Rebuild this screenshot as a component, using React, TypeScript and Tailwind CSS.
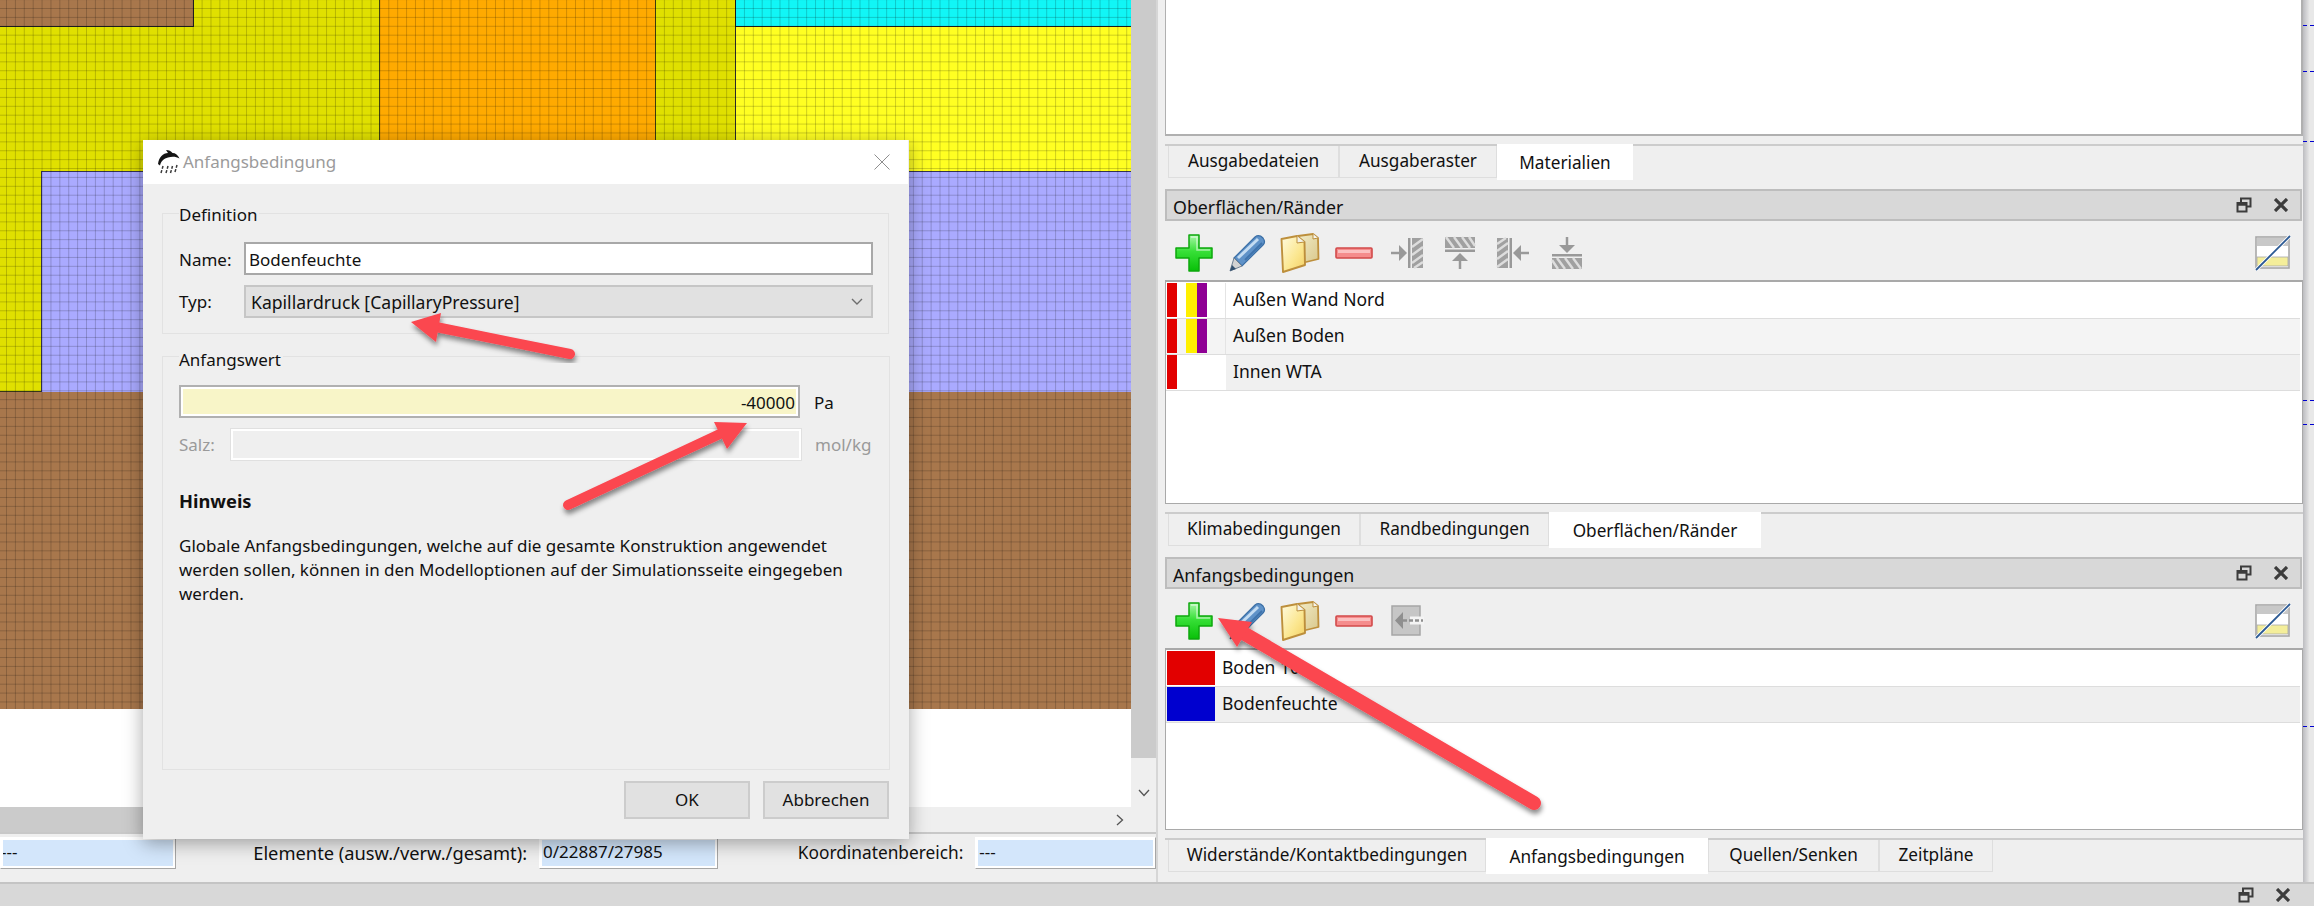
import React from "react";

const Plus = () => (
  <svg width="38" height="38" viewBox="0 0 38 38">
    <defs>
      <linearGradient id="pg" x1="0" y1="0" x2="0" y2="1">
        <stop offset="0" stopColor="#a8f8a8" />
        <stop offset="0.45" stopColor="#38e038" />
        <stop offset="1" stopColor="#08c008" />
      </linearGradient>
    </defs>
    <path d="M14 1h10v13h13v10H24v13H14V24H1V14h13z" fill="url(#pg)" stroke="#0da80d" strokeWidth="1.5" strokeLinejoin="round" />
    <path d="M16 3h6v13h13" fill="none" stroke="#ffffff" strokeOpacity="0.55" strokeWidth="1.5" />
  </svg>
);

const Pencil = () => (
  <svg width="38" height="38" viewBox="0 0 38 38">
    <path d="M6 24 L27 3 Q31 0 35 4 Q38 8 35 11 L14 32 Z" fill="#5f92c8" stroke="#3a6ea5" strokeWidth="1.2" />
    <path d="M10 24 L30 5" stroke="#c4dcf2" strokeWidth="3" />
    <path d="M17 26 L34 9" stroke="#3f74ad" strokeWidth="2" />
    <path d="M6 24 L14 32 L2 37 Z" fill="#d2d2d2" stroke="#6d7f92" strokeWidth="1" />
    <path d="M2 37 L4 31 L8 35 Z" fill="#33506e" />
  </svg>
);

const Files = () => (
  <svg width="40" height="40" viewBox="0 0 40 40">
    <defs>
      <linearGradient id="fg" x1="0" y1="0" x2="1" y2="1">
        <stop offset="0" stopColor="#fffbe0" />
        <stop offset="0.6" stopColor="#fbe68e" />
        <stop offset="1" stopColor="#f3cf63" />
      </linearGradient>
      <linearGradient id="fb" x1="0" y1="0" x2="1" y2="1">
        <stop offset="0" stopColor="#f2ecc8" />
        <stop offset="1" stopColor="#d9c88c" />
      </linearGradient>
    </defs>
    <path d="M18 3 L33 1 L38 5 L38.5 26 L22 30 Z" fill="url(#fb)" stroke="#bd8f3c" strokeWidth="1.8" strokeLinejoin="round" />
    <path d="M33 1 L33 6 L38 5" fill="#f6f6f0" stroke="#bd8f3c" strokeWidth="1" />
    <path d="M1.5 6 L17 3 L24.5 9 L25 32 L3 39 Z" fill="url(#fg)" stroke="#bd8f3c" strokeWidth="1.9" strokeLinejoin="round" />
    <path d="M17 3 L17 10 L24.5 9" fill="#f2f2ea" stroke="#bd8f3c" strokeWidth="1" />
  </svg>
);

const Minus = () => (
  <svg width="38" height="12" viewBox="0 0 38 12">
    <rect x="1" y="1" width="36" height="10" rx="1" fill="#f58c8c" stroke="#d24a4a" strokeWidth="1.6" />
    <rect x="3" y="3" width="32" height="3" fill="#fbc0c0" />
  </svg>
);

const WallIcon = ({ rotate }: { rotate: number }) => (
  <svg width="34" height="34" viewBox="0 0 34 34">
    <g transform={`rotate(${rotate} 17 17)`}>
      <rect x="22" y="2" width="11" height="30" fill="#a0a0a0" />
      <path d="M22 11 L33 3 M22 19 L33 11 M22 27 L33 19 M24 32 L33 26" stroke="#dddddd" strokeWidth="2.4" />
      <rect x="18" y="2" width="2.5" height="30" fill="#999999" />
      <path d="M1 17 H10" stroke="#999999" strokeWidth="2.5" />
      <path d="M9 9 L17 17 L9 25 Z" fill="#999999" />
    </g>
  </svg>
);

const ExportIcon = () => (
  <svg width="34" height="34" viewBox="0 0 34 34">
    <rect x="2" y="2" width="28" height="29" fill="#c6c6c6" stroke="#a6a6a6" strokeWidth="1.5" />
    <rect x="20" y="12.5" width="14" height="8" fill="#f4f4f4" />
    <path d="M5 16.5 L13 8 V25 Z" fill="#8f8f8f" />
    <path d="M13 16.5 H33" stroke="#8f8f8f" strokeWidth="2.5" strokeDasharray="4 2" />
  </svg>
);

const TableIcon = () => (
  <svg width="36" height="36" viewBox="0 0 36 36">
    <rect x="1" y="2" width="33" height="31" fill="#ffffff" stroke="#a8a8a8" strokeWidth="1.6" />
    <rect x="2" y="3" width="31" height="8" fill="#c8c8c8" />
    <rect x="2" y="22" width="31" height="9" fill="#f4ee9a" stroke="#a8a8a8" strokeWidth="0.8" />
    <path d="M1 35 L35 1" stroke="#ffffff" strokeWidth="3.5" />
    <path d="M1 35 L35 1" stroke="#2c5a94" strokeWidth="1.8" />
  </svg>
);

const FloatIcon = () => (
  <svg width="16" height="16" viewBox="0 0 16 16" fill="none" stroke="#3c3c3c" strokeWidth="2">
    <rect x="5" y="1.5" width="9.5" height="8" />
    <rect x="1.5" y="6" width="9" height="8.5" fill="#d8d8d8" />
    <path d="M1.5 7.5h9" strokeWidth="2.5" />
  </svg>
);

const CloseIcon = () => (
  <svg width="14" height="14" viewBox="0 0 14 14" stroke="#3c3c3c" strokeWidth="3.2">
    <path d="M1 1 L13 13 M13 1 L1 13" />
  </svg>
);

const Logo = () => (
  <svg width="24" height="24" viewBox="0 0 24 24">
    <path d="M2 14 C3 7 7 3 12 3 L10 0 C13 0 15 1 16.5 3 C19.5 3 22 5 23.5 8.5 C20 6.5 16 6.5 12 7.5 C8 8.5 5 11 4 15.5 Z" fill="#141414" />
    <path d="M5 23 L7 16 M10 23 L12 16 M14.5 23 L16.5 16 M19 22 L21 15" stroke="#3a3a3a" strokeWidth="1.5" strokeDasharray="3 1.5" />
  </svg>
);

const Canvas = () => (
  <div className="relative h-[807px] w-full overflow-hidden bg-white">
    <div className="absolute left-0 top-0 h-[709px] w-full bg-[#a8774c]" />
    <div className="absolute left-0 top-0 h-[392px] w-full bg-[#e0e000] border-b border-[#3a3a1a]" />
    <div className="absolute left-0 top-0 h-[27px] w-[194px] bg-[#a8774c] border-b border-r border-[#222222]" />
    <div className="absolute left-[379px] top-0 h-[172px] w-[277px] bg-[#ffaa00] border-x border-[#4a4a10]" />
    <div className="absolute left-[735px] top-0 h-[27px] w-[396px] bg-[#11f6f6] border-b border-l border-[#222222]" />
    <div className="absolute left-[735px] top-[27px] h-[145px] w-[396px] bg-[#ffff22] border-b border-l border-[#333333]" />
    <div className="absolute left-[41px] top-[171px] h-[221px] w-[1090px] bg-[#aaaaff] border-t border-l border-[#333355]" />
    <div className="absolute left-0 top-0 h-[709px] w-full bg-[linear-gradient(rgba(0,0,0,0.19)_1px,transparent_1px),linear-gradient(90deg,rgba(0,0,0,0.19)_1px,transparent_1px)] bg-[size:8.9px_8.9px] bg-[position:6px_8px]" />
  </div>
);

const Field = ({ cls, children }: { cls: string; children: React.ReactNode }) => (
  <div className={`${cls} h-[32px] border border-[#a6a6a6] border-t-white border-l-white bg-[#d3e6fb] px-[3px] text-[17px] leading-[28px] outline-2 outline-white -outline-offset-3`}>
    {children}
  </div>
);

const Status = () => (
  <div className="flex h-[50px] items-start border-t-2 border-[#c8c8c8] pt-[3px]">
    <Field cls="w-[176px] pl-0">---</Field>
    <div className="w-[364px] pr-[12px] pt-[4px] text-right text-[18.3px]">Elemente (ausw./verw./gesamt):</div>
    <Field cls="w-[179px]">0/22887/27985</Field>
    <div className="w-[258px] pr-[12px] pt-[4px] text-right text-[17.3px]">Koordinatenbereich:</div>
    <Field cls="w-[181px]">---</Field>
  </div>
);

type Tab = { label: string; w: string };

const Tabs = ({ tabs, active }: { tabs: Tab[]; active: number }) => (
  <div className="flex h-[36px] border-t-2 border-[#cccccc] pl-[3px] text-[17.2px]">
    {tabs.map((t, i) =>
      i === active ? (
        <div key={t.label} className={`${t.w} -mt-[2px] h-[36px] bg-white text-center leading-[38px]`}>
          {t.label}
        </div>
      ) : (
        <div key={t.label} className={`${t.w} h-[32px] border-x border-b border-[#dedede] text-center leading-[30px]`}>
          {t.label}
        </div>
      )
    )}
  </div>
);

const DockHeader = ({ title }: { title: string }) => (
  <div className="flex h-[32px] w-[1137px] items-center justify-between border-2 border-[#bdbdbd] bg-[#d8d8d8] pl-[6px] pr-[12px] text-[17.8px]">
    <span className="pt-[3px]">{title}</span>
    <div className="flex items-center gap-[22px]">
      <FloatIcon />
      <CloseIcon />
    </div>
  </div>
);

const Btn = ({ children }: { children: React.ReactNode }) => (
  <div className="flex w-[53.3px] items-center justify-center">{children}</div>
);

const Toolbar = ({ children }: { children: React.ReactNode }) => (
  <div className="flex h-[59px] items-center pl-[2px] pr-[12px] pt-[4px]">
    {children}
    <div className="ml-auto">
      <TableIcon />
    </div>
  </div>
);

const Cell = ({ cls }: { cls: string }) => <div className={`${cls} h-full`} />;

const Surfaces = () => (
  <div className="h-[224px] border border-[#a9a9a9] border-t-2 bg-white pr-[2px] pt-[1px] text-[17.5px]">
    <div className="flex h-[36px] border-b border-[#dddddd] bg-white">
      <div className="flex h-full w-[60px] border-r border-[#e4e4e4] pl-[1px] pb-[1px]">
        <Cell cls="w-[10px] bg-[#e20000]" /><Cell cls="w-[9px]" /><Cell cls="w-[11px] bg-[#fff000]" /><Cell cls="w-[10px] bg-[#8f0094]" />
      </div>
      <div className="pl-[7px] leading-[33px]">Außen Wand Nord</div>
    </div>
    <div className="flex h-[36px] border-b border-[#dddddd] bg-[#f4f4f4]">
      <div className="flex h-full w-[60px] border-r border-[#e4e4e4] pl-[1px] pb-[1px]">
        <Cell cls="w-[10px] bg-[#e20000]" /><Cell cls="w-[9px]" /><Cell cls="w-[11px] bg-[#fff000]" /><Cell cls="w-[10px] bg-[#8f0094]" />
      </div>
      <div className="pl-[7px] leading-[33px]">Außen Boden</div>
    </div>
    <div className="flex h-[36px] border-b border-[#dddddd] bg-[#f0f0f0]">
      <div className="flex h-full w-[60px] bg-white pl-[1px] pb-[1px]">
        <Cell cls="w-[10px] bg-[#e20000]" />
      </div>
      <div className="pl-[7px] leading-[33px]">Innen WTA</div>
    </div>
  </div>
);

const Conditions = () => (
  <div className="h-[182px] border border-[#a9a9a9] border-t-2 bg-white pr-[2px] pt-[1px] text-[17.5px]">
    <div className="flex h-[36px] border-b border-[#dddddd]">
      <div className="ml-[1px] h-[34px] w-[48px] bg-[#e20000]" />
      <div className="pl-[7px] leading-[33px]">Boden 10</div>
    </div>
    <div className="flex h-[36px] border-b border-[#dddddd] bg-[#efefef]">
      <div className="ml-[1px] h-[34px] w-[48px] bg-[#0000cf]" />
      <div className="pl-[7px] leading-[33px]">Bodenfeuchte</div>
    </div>
  </div>
);

const Dialog = () => (
  <div className="absolute left-[143px] top-[140px] flex h-[699px] w-[766px] flex-col bg-[#efefef] shadow-[0_4px_18px_rgba(0,0,0,0.35)]">
    <div className="flex h-[44px] w-[765px] shrink-0 items-center bg-white pl-[13px] pr-[18px]">
      <Logo />
      <span className="ml-[3px] text-[#9b9b9b]">Anfangsbedingung</span>
      <svg className="ml-auto" width="16" height="16" viewBox="0 0 16 16" stroke="#8e8e8e" strokeWidth="1">
        <path d="M0.5 0.5 L15.5 15.5 M15.5 0.5 L0.5 15.5" />
      </svg>
    </div>
    <div className="flex flex-1 flex-col px-[19px] pb-[20px] pt-[29px]">
      <div className="h-[121px] w-[727px] shrink-0 border border-[#e2e2e2] pl-[16px]">
        <div className="-mt-[12px] h-[26px] w-fit bg-[#efefef] pr-[2px] leading-[26px]">Definition</div>
        <div className="mt-[14px] flex h-[33px] items-center">
          <div className="w-[65px] pt-[2px]">Name:</div>
          <div className="h-full w-[629px] border-2 border-[#a8a8a8] bg-white pl-[3px] leading-[31px]">Bodenfeuchte</div>
        </div>
        <div className="mt-[10px] flex h-[33px] items-center">
          <div className="w-[65px]">Typ:</div>
          <div className="flex h-full w-[629px] items-center justify-between border-2 border-[#c6c6c6] bg-[#e1e1e1] pl-[5px] pr-[8px]">
            <span className="text-[17.6px]">Kapillardruck [CapillaryPressure]</span>
            <svg width="12" height="7" viewBox="0 0 12 7" fill="none" stroke="#6e6e6e" strokeWidth="1.4">
              <path d="M1 1 L6 6 L11 1" />
            </svg>
          </div>
        </div>
      </div>
      <div className="mt-[22px] flex-1 border border-[#e2e2e2] pl-[16px]">
        <div className="-mt-[10px] h-[26px] w-fit bg-[#efefef] pr-[2px] leading-[26px]">Anfangswert</div>
        <div className="mt-[12px] flex h-[33px] items-center">
          <div className="h-full w-[621px] border-2 border-[#b0b0b0] bg-[#f8f5c8] pr-[3px] text-right leading-[31px] outline-2 outline-white -outline-offset-4">-40000</div>
          <div className="ml-[14px] pt-[2px]">Pa</div>
        </div>
        <div className="mt-[11px] flex h-[31px] items-center text-[#9a9a9a]">
          <div className="w-[52px]">Salz:</div>
          <div className="h-full w-[570px] border-2 border-white bg-[#efefef] outline-1 outline-[#e0e0e0]" />
          <div className="ml-[14px]">mol/kg</div>
        </div>
        <div className="mt-[29px] h-[24px] text-[18.3px] font-bold leading-[24px]">Hinweis</div>
        <p className="mt-[21px] w-[700px] leading-[24px]">
          Globale Anfangsbedingungen, welche auf die gesamte Konstruktion angewendet werden sollen, können in den Modelloptionen auf der Simulationsseite eingegeben werden.
        </p>
      </div>
      <div className="mt-[11px] flex h-[38px] shrink-0 justify-end gap-[13px] pr-[1px]">
        <div className="w-[126px] border-2 border-[#cccccc] bg-[#e1e1e1] text-center leading-[34px]">OK</div>
        <div className="w-[126px] border-2 border-[#cccccc] bg-[#e1e1e1] text-center leading-[34px]">Abbrechen</div>
      </div>
    </div>
  </div>
);

const Arrows = () => (
  <svg className="absolute left-0 top-0" width="2314" height="906" viewBox="0 0 2314 906" fill="#fb4650">
    <defs>
      <filter id="ash" x="-20%" y="-20%" width="140%" height="140%">
        <feDropShadow dx="1" dy="4" stdDeviation="2.5" floodColor="#000000" floodOpacity="0.45" />
      </filter>
    </defs>
    <g filter="url(#ash)">
      <path d="M570 354 L436 327" stroke="#fb4650" strokeWidth="10" strokeLinecap="round" />
      <path d="M411 322 L441 313 L436 342 Z" />
    </g>
    <g filter="url(#ash)">
      <path d="M568 505 L722 433" stroke="#fb4650" strokeWidth="10" strokeLinecap="round" />
      <path d="M747 423 L714 422 L727 449 Z" />
    </g>
    <g filter="url(#ash)">
      <path d="M1534 803 L1245 634" stroke="#fb4650" strokeWidth="14" strokeLinecap="round" />
      <path d="M1218 618 L1252 622 L1237 647 Z" />
    </g>
  </svg>
);

export default function App() {
  return (
    <div className="relative flex h-[906px] w-[2314px] flex-col overflow-hidden bg-[#efefef] font-['Noto_Sans',sans-serif] text-[17px] leading-[24px] text-[#111111]">
      <div className="flex h-[882px]">
        <div className="flex w-[1158px] flex-col border-r-2 border-[#d6d6d6]">
          <div className="flex h-[832px]">
            <div className="flex w-[1131px] flex-col">
              <Canvas />
              <div className="flex h-[25px] items-center justify-end pr-[7px]">
                <div className="mr-auto h-full w-[400px] bg-[#cbcbcb]" />
                <svg width="8" height="12" viewBox="0 0 8 12" fill="none" stroke="#555555" strokeWidth="1.3">
                  <path d="M1 1 L6.5 6 L1 11" />
                </svg>
              </div>
            </div>
            <div className="flex w-[25px] flex-col items-center">
              <div className="h-[758px] w-full bg-[#cbcbcb]" />
              <svg className="mt-[31px]" width="12" height="8" viewBox="0 0 12 8" fill="none" stroke="#555555" strokeWidth="1.3">
                <path d="M1 1 L6 6.5 L11 1" />
              </svg>
            </div>
          </div>
          <Status />
        </div>
        <div className="flex w-[1145px] flex-col pl-[7px]">
          <div className="h-[136px] w-[1138px] border-b-2 border-r-2 border-l border-[#b0b0b0] bg-white" />
          <div className="mt-[8px]">
            <Tabs tabs={[{ label: "Ausgabedateien", w: "w-[171px]" }, { label: "Ausgaberaster", w: "w-[158px]" }, { label: "Materialien", w: "w-[136px]" }]} active={2} />
          </div>
          <div className="mt-[9px]"><DockHeader title="Oberflächen/Ränder" /></div>
          <Toolbar>
            <Btn><Plus /></Btn>
            <Btn><Pencil /></Btn>
            <Btn><Files /></Btn>
            <Btn><Minus /></Btn>
            <Btn><WallIcon rotate={0} /></Btn>
            <Btn><WallIcon rotate={-90} /></Btn>
            <Btn><WallIcon rotate={180} /></Btn>
            <Btn><WallIcon rotate={90} /></Btn>
          </Toolbar>
          <Surfaces />
          <div className="mt-[8px]">
            <Tabs tabs={[{ label: "Klimabedingungen", w: "w-[192px]" }, { label: "Randbedingungen", w: "w-[189px]" }, { label: "Oberflächen/Ränder", w: "w-[212px]" }]} active={2} />
          </div>
          <div className="mt-[9px]"><DockHeader title="Anfangsbedingungen" /></div>
          <Toolbar>
            <Btn><Plus /></Btn>
            <Btn><Pencil /></Btn>
            <Btn><Files /></Btn>
            <Btn><Minus /></Btn>
            <Btn><ExportIcon /></Btn>
          </Toolbar>
          <Conditions />
          <div className="mt-[8px]">
            <Tabs tabs={[{ label: "Widerstände/Kontaktbedingungen", w: "w-[318px]" }, { label: "Anfangsbedingungen", w: "w-[222px]" }, { label: "Quellen/Senken", w: "w-[171px]" }, { label: "Zeitpläne", w: "w-[114px]" }]} active={1} />
          </div>
        </div>
        <div className="flex-1 bg-[linear-gradient(90deg,#bcbcc0,#e8e8e8_60%)]">
          <svg width="11" height="882" viewBox="0 0 11 882" stroke="#0000d0" strokeWidth="1" strokeDasharray="4 3">
            <path d="M0 25.5H11 M0 71.5H11 M0 141.5H11 M0 400.5H11 M0 424.5H11 M0 726.5H11" />
          </svg>
        </div>
      </div>
      <div className="flex h-[24px] items-center justify-end gap-[22px] border-t-2 border-[#c4c4c4] bg-[#d8d8d8] pr-[24px]">
        <FloatIcon />
        <CloseIcon />
      </div>
      <Dialog />
      <Arrows />
    </div>
  );
}
